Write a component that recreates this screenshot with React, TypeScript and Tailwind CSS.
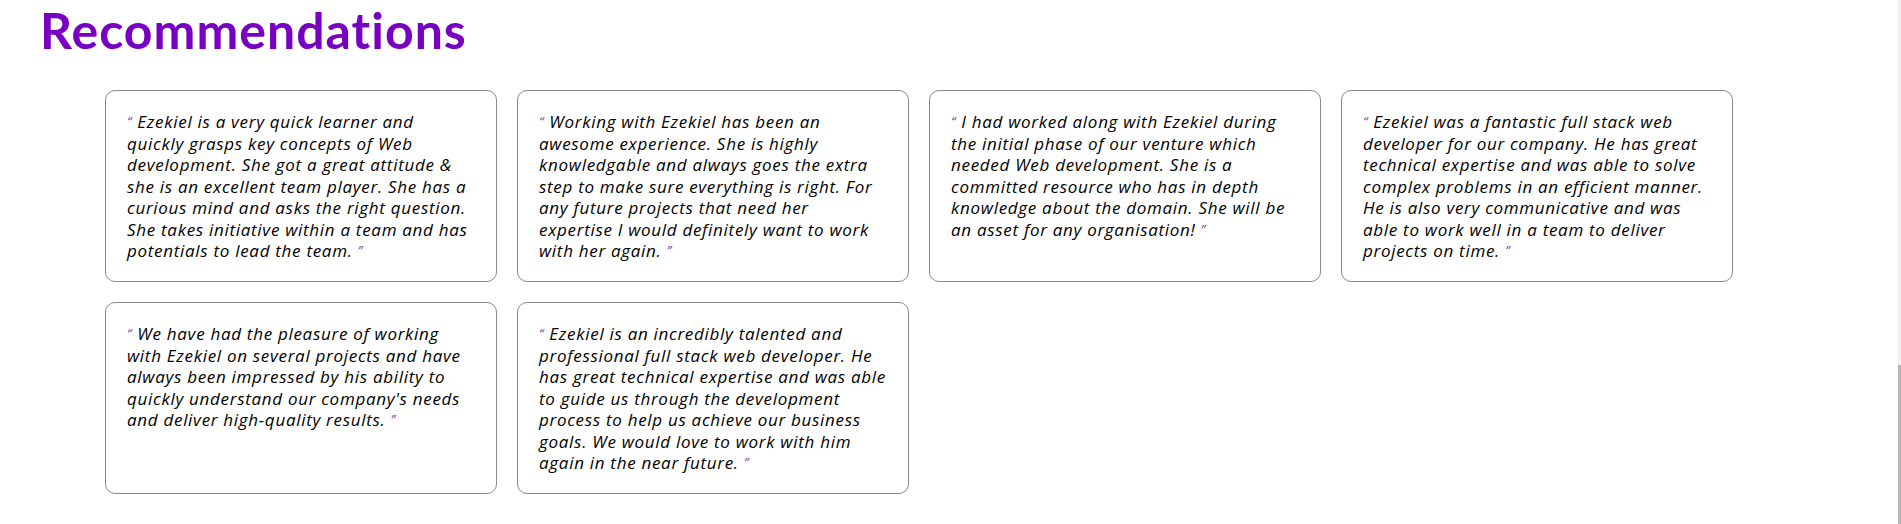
import React from "react";

const items: string[][] = [
  [
    "Ezekiel is a very quick learner and",
    "quickly grasps key concepts of Web",
    "development. She got a great attitude &",
    "she is an excellent team player. She has a",
    "curious mind and asks the right question.",
    "She takes initiative within a team and has",
    "potentials to lead the team.",
  ],
  [
    "Working with Ezekiel has been an",
    "awesome experience. She is highly",
    "knowledgable and always goes the extra",
    "step to make sure everything is right. For",
    "any future projects that need her",
    "expertise I would definitely want to work",
    "with her again.",
  ],
  [
    "I had worked along with Ezekiel during",
    "the initial phase of our venture which",
    "needed Web development. She is a",
    "committed resource who has in depth",
    "knowledge about the domain. She will be",
    "an asset for any organisation!",
  ],
  [
    "Ezekiel was a fantastic full stack web",
    "developer for our company. He has great",
    "technical expertise and was able to solve",
    "complex problems in an efficient manner.",
    "He is also very communicative and was",
    "able to work well in a team to deliver",
    "projects on time.",
  ],
  [
    "We have had the pleasure of working",
    "with Ezekiel on several projects and have",
    "always been impressed by his ability to",
    "quickly understand our company's needs",
    "and deliver high-quality results.",
  ],
  [
    "Ezekiel is an incredibly talented and",
    "professional full stack web developer. He",
    "has great technical expertise and was able",
    "to guide us through the development",
    "process to help us achieve our business",
    "goals. We would love to work with him",
    "again in the near future.",
  ],
];

function Card({ lines }: { lines: string[] }) {
  const last = lines.length - 1;
  return (
    <div className="w-[392px] h-[192px] rounded-[10px] border border-[#8a8a8a] bg-white pl-[21px] pr-[10px] pt-[20px]">
      <div className="italic text-[17px] leading-[21.5px] tracking-[0.7px] text-black">
        {lines.map((l, i) => (
          <div key={i} className="whitespace-nowrap">
            {i === 0 && (
              <>
                <span className="text-[#8037c8] text-[13px] align-top">“</span>{" "}
              </>
            )}
            {l}
            {i === last && (
              <>
                {"  "}
                <span className="text-[#8037c8] text-[13px] align-top">”</span>
              </>
            )}
          </div>
        ))}
      </div>
    </div>
  );
}

export default function App() {
  return (
    <div className="flex min-h-screen bg-white" style={{ fontFamily: '"Open Sans", sans-serif' }}>
      <main className="flex-1">
        <h1
          className="ml-[40px] mt-[5px] text-[50px] leading-[50px] font-bold tracking-[1px] text-[#7700c2] [font-variant-ligatures:none]"
          style={{ fontFamily: "Lato, sans-serif" }}
        >
          Recommendations
        </h1>
        <div className="mt-[35px] ml-[105px] grid w-fit grid-cols-[repeat(4,392px)] gap-x-[20px] gap-y-[20px]">
          {items.map((t, i) => (
            <Card key={i} lines={t} />
          ))}
        </div>
      </main>
      <div className="flex w-[3px] flex-col bg-[#f0f0f0]">
        <div className="flex-1" />
        <div className="h-[159px] bg-[#b5b5b5]" />
      </div>
    </div>
  );
}
